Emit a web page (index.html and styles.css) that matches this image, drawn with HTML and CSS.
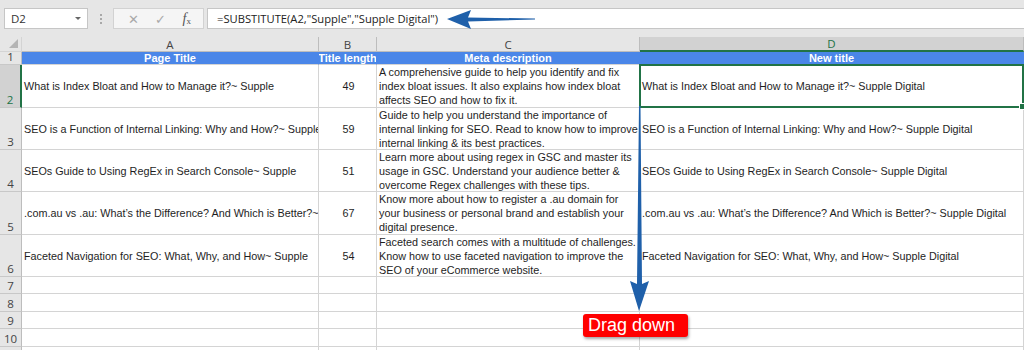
FILE: index.html
```html
<!DOCTYPE html>
<html>
<head>
    <meta charset="UTF-8">
    <title>Substitute formula</title>
    <link rel="stylesheet" href="styles.css">
</head>
<body>
    <div class="toolbar">
        <div class="name-box">
            <span>D2</span>
            <span class="caret"></span>
        </div>
        <div class="grip"><i></i><i></i><i></i></div>
        <div class="fx-buttons">
            <span class="btn-x">&#x2715;</span>
            <span class="btn-ok">&#x2713;</span>
            <span class="btn-fx"><i>f</i><sub>x</sub></span>
        </div>
        <div class="formula">=SUBSTITUTE(A2,"Supple","Supple Digital")</div>
    </div>

    <div class="sheet">
        <!-- column letters -->
        <div class="corner"><span></span></div>
        <div class="col-head">A</div>
        <div class="col-head">B</div>
        <div class="col-head">C</div>
        <div class="col-head active">D</div>

        <!-- header row -->
        <div class="row-head">1</div>
        <div class="cell title">Page Title</div>
        <div class="cell title">Title length</div>
        <div class="cell title">Meta description</div>
        <div class="cell title">New title</div>

        <div class="row-head active">2</div>
        <div class="cell">What is Index Bloat and How to Manage it?~ Supple</div>
        <div class="cell num">49</div>
        <div class="cell wrap">A comprehensive guide to help you identify and fix<br>index bloat issues. It also explains how index bloat<br>affects SEO and how to fix it.</div>
        <div class="cell selected">What is Index Bloat and How to Manage it?~ Supple Digital</div>

        <div class="row-head">3</div>
        <div class="cell">SEO is a Function of Internal Linking: Why and How?~ Supple</div>
        <div class="cell num">59</div>
        <div class="cell wrap">Guide to help you understand the importance of<br>internal linking for SEO. Read to know how to improve<br>internal linking &amp; its best practices.</div>
        <div class="cell">SEO is a Function of Internal Linking: Why and How?~ Supple Digital</div>

        <div class="row-head">4</div>
        <div class="cell">SEOs Guide to Using RegEx in Search Console~ Supple</div>
        <div class="cell num">51</div>
        <div class="cell wrap">Learn more about using regex in GSC and master its<br>usage in GSC. Understand your audience better &amp;<br>overcome Regex challenges with these tips.</div>
        <div class="cell">SEOs Guide to Using RegEx in Search Console~ Supple Digital</div>

        <div class="row-head">5</div>
        <div class="cell">.com.au vs .au: What’s the Difference? And Which is Better?~ Supple</div>
        <div class="cell num">67</div>
        <div class="cell wrap">Know more about how to register a .au domain for<br>your business or personal brand and establish your<br>digital presence.</div>
        <div class="cell">.com.au vs .au: What’s the Difference? And Which is Better?~ Supple Digital</div>

        <div class="row-head">6</div>
        <div class="cell">Faceted Navigation for SEO: What, Why, and How~ Supple</div>
        <div class="cell num">54</div>
        <div class="cell wrap">Faceted search comes with a multitude of challenges.<br>Know how to use faceted navigation to improve the<br>SEO of your eCommerce website.</div>
        <div class="cell">Faceted Navigation for SEO: What, Why, and How~ Supple Digital</div>

        <div class="row-head">7</div>
        <div class="cell"></div><div class="cell"></div><div class="cell"></div><div class="cell"></div>
        <div class="row-head">8</div>
        <div class="cell"></div><div class="cell"></div><div class="cell"></div><div class="cell"></div>
        <div class="row-head">9</div>
        <div class="cell"></div><div class="cell"></div><div class="cell"></div><div class="cell"></div>
        <div class="row-head">10</div>
        <div class="cell"></div><div class="cell"></div><div class="cell"></div><div class="cell"></div>
        <div class="row-head">11</div>
        <div class="cell"></div><div class="cell"></div><div class="cell"></div><div class="cell"></div>
    </div>

    <!-- annotations drawn over the sheet -->
    <svg class="arrow-left" width="100" height="24" viewBox="0 0 100 24">
        <polygon points="0,11 24,2 21,9.5 88,10.5 88,11.5 21,13.5 24,21" fill="#1f60aa"/>
    </svg>
    <svg class="arrow-down" width="24" height="206" viewBox="0 0 24 206">
        <polygon points="11,0 12.5,0 14,178 21,175 11,205 2,175 9,178" fill="#1f60aa"/>
    </svg>
    <div class="drag-label">Drag down</div>
</body>
</html>
```

FILE: styles.css
```css
body {
    margin: 0;
    padding: 0;
    background-color: #fff;
    font-family: "Liberation Sans", Arial, sans-serif;
    font-size: 10.8px;
    color: #1e1e1e;
    overflow: hidden;
}
.toolbar {
    height: 37px;
    box-sizing: border-box;
    padding: 8px 0 0 4px;
    background-color: #e6e6e6;
    display: flex;
    align-items: flex-start;
    font-family: "Open Sans", "Noto Sans", sans-serif;
}
.name-box {
    width: 84px;
    height: 21px;
    box-sizing: border-box;
    border: 1px solid #c6c6c6;
    background-color: #fff;
    display: flex;
    align-items: center;
    justify-content: space-between;
    padding: 0 6px 0 6px;
    color: #333;
    font-size: 11.5px;
}
.caret {
    width: 0;
    height: 0;
    border-left: 3px solid transparent;
    border-right: 3px solid transparent;
    border-top: 3px solid #666;
}
.grip {
    width: 25px;
    height: 21px;
    display: flex;
    flex-direction: column;
    align-items: center;
    justify-content: center;
    gap: 2px;
}
.grip i {
    width: 2px;
    height: 2px;
    background-color: #a8a8a8;
}
.fx-buttons {
    width: 91px;
    height: 21px;
    box-sizing: border-box;
    border: 1px solid #d2d2d2;
    background-color: #f5f5f5;
    display: flex;
    align-items: center;
    justify-content: space-around;
    padding: 0 4px 0 6px;
    color: #a9a9a9;
    font-size: 13px;
}
.btn-fx {
    color: #555;
    font-family: "Liberation Serif", serif;
    font-size: 14px;
}
.btn-fx sub {
    font-size: 9px;
    vertical-align: -1px;
}
.formula {
    flex: 1;
    height: 21px;
    box-sizing: border-box;
    margin-left: 3px;
    border: 1px solid #c6c6c6;
    border-right: none;
    background-color: #fff;
    padding: 0 9px;
    line-height: 19px;
    font-size: 11.2px;
    color: #222;
}
.sheet {
    display: grid;
    grid-template-columns: 22px 297px 58px 263px 384px;
    grid-template-rows: 15px 13px 43px 42px 42px 43px 42px 17px 18px 17px 18px 18px;
}
.sheet > div {
    box-sizing: border-box;
    border-right: 1px solid #d4d4d4;
    border-bottom: 1px solid #d4d4d4;
    overflow: hidden;
    white-space: nowrap;
}
.corner {
    background-color: #e6e6e6;
    position: relative;
}
.corner span {
    position: absolute;
    right: 3px;
    bottom: 3px;
    width: 0;
    height: 0;
    border-left: 9px solid transparent;
    border-bottom: 9px solid #b4b4b4;
}
.sheet > .col-head {
    background-color: #e6e6e6;
    border-right-color: #bdbdbd;
    border-bottom-color: #bdbdbd;
    text-align: center;
    line-height: 15px;
    font-family: "Open Sans", "Noto Sans", sans-serif;
    font-size: 11.5px;
    color: #444;
}
.sheet > .col-head.active {
    background-color: #d2d2d2;
    border-bottom: 2px solid #217346;
    color: #217346;
    line-height: 14px;
}
.sheet > .row-head {
    background-color: #e6e6e6;
    border-right-color: #bdbdbd;
    border-bottom-color: #c8c8c8;
    display: flex;
    align-items: flex-end;
    justify-content: center;
    font-family: "Open Sans", "Noto Sans", sans-serif;
    font-size: 11.5px;
    line-height: 15px;
    color: #444;
}
.sheet > .row-head.active {
    background-color: #d2d2d2;
    border-right: 2px solid #217346;
    color: #217346;
}
.cell {
    display: flex;
    align-items: center;
    padding-left: 2px;
}
.sheet > .title {
    background-color: #4a86e8;
    border-right-color: #4a86e8;
    border-bottom-color: #d4d4d4;
    justify-content: center;
    color: #fff;
    font-size: 11px;
    font-weight: bold;
    line-height: 12px;
    padding-left: 0;
}
.num {
    justify-content: center;
}
.wrap {
    align-items: flex-start;
    line-height: 14px;
    padding-left: 2px;
}
.selected {
    position: relative;
}
.sheet > .selected {
    overflow: visible;
}
.selected::after {
    content: "";
    position: absolute;
    left: -1px;
    top: -1px;
    right: -1px;
    bottom: -1px;
    border: 2px solid #217346;
}
.selected::before {
    content: "";
    position: absolute;
    right: -3px;
    bottom: -3px;
    width: 5px;
    height: 5px;
    background-color: #217346;
    border: 1px solid #fff;
    z-index: 1;
}
.arrow-left {
    position: absolute;
    left: 447px;
    top: 8px;
}
.arrow-down {
    position: absolute;
    left: 628px;
    top: 106px;
}
.drag-label {
    position: absolute;
    left: 583px;
    top: 314px;
    width: 105px;
    height: 23px;
    box-sizing: border-box;
    padding-left: 5px;
    background-color: #ff0000;
    border-radius: 3px;
    box-shadow: 1px 2px 3px rgba(0, 0, 0, 0.35);
    color: #fff;
    font-size: 18px;
    line-height: 23px;
}
```
